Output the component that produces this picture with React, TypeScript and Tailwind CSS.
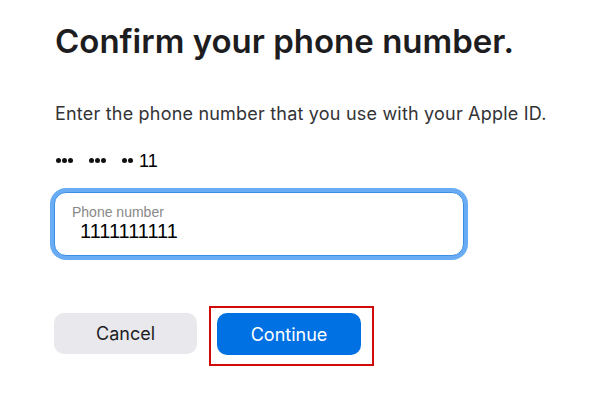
function Dots({ count, className }: { count: number; className: string }) {
  return (
    <span className={`flex shrink-0 gap-[1px] ${className}`}>
      {Array.from({ length: count }).map((_, i) => (
        <span key={i} className="block h-[5px] w-[5px] shrink-0 rounded-full bg-[#111111]" />
      ))}
    </span>
  );
}

export default function App() {
  return (
    <div className="min-h-screen bg-white pl-[55px] pt-[21px] font-['Inter',sans-serif]">
      <h1 className="text-[33px] font-semibold leading-[40px] text-[#1d1d1f]">
        Confirm your phone number.
      </h1>

      <p className="mt-[41px] text-[18px] leading-[24px] tracking-[0.2px] text-[#333336]">
        Enter the phone number that you use with your Apple ID.
      </p>

      <div className="mt-[23px] flex h-[24px] items-center pl-[1px] font-['Liberation_Sans',Arial,sans-serif] text-[18px] leading-[24px] text-black">
        <Dots count={3} className="mr-[16px] mt-[-2px]" />
        <Dots count={3} className="mr-[16px] mt-[-2px]" />
        <Dots count={2} className="mr-[6px] mt-[-2px]" />
        <span>11</span>
      </div>

      <div className="mt-[19px] ml-[-1px] flex h-[64px] w-[410px] flex-col rounded-[12px] border border-[#3b8de6] bg-white pl-[17px] pt-[11px] shadow-[0_0_0_4px_#6aacf3]">
        <span className="font-['Liberation_Sans',Arial,sans-serif] text-[14px] leading-[16px] text-[#888888]">
          Phone number
        </span>
        <span className="ml-[8px] font-['Liberation_Sans',Arial,sans-serif] text-[20px] leading-[23px] text-black">
          1111111111
        </span>
      </div>

      <div className="mt-[57px] ml-[-1px] flex items-start gap-[20px]">
        <button className="h-[41px] w-[143px] rounded-[10px] bg-[#e8e8ed] text-[18px] text-[#1d1d1f]">
          Cancel
        </button>
        <div className="relative">
          <button className="h-[42px] w-[144px] rounded-[10px] bg-[#0071e3] text-[18px] text-white">
            Continue
          </button>
          <div className="pointer-events-none absolute -left-[8px] -top-[7px] -right-[13px] -bottom-[11px] border-2 border-[#d10a0a]" />
        </div>
      </div>
    </div>
  );
}
